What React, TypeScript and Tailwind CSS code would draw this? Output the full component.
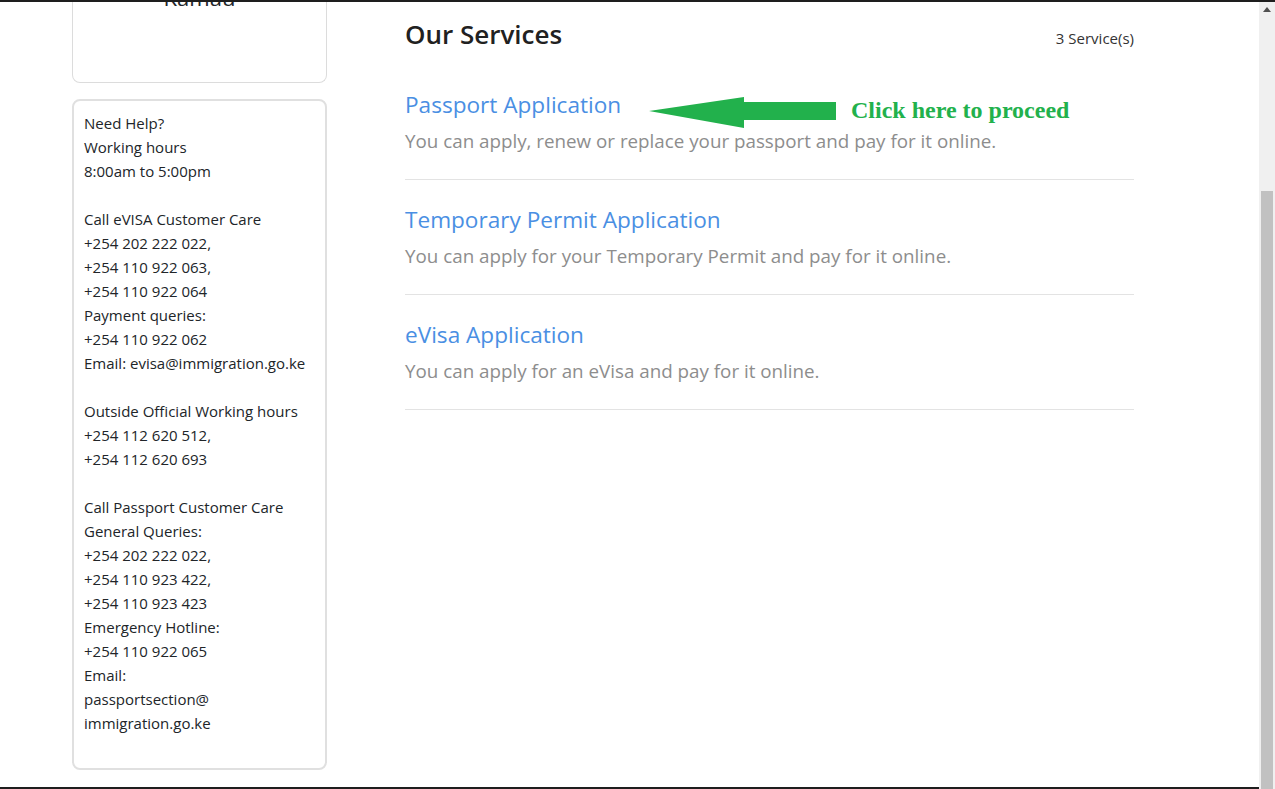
import React from 'react';

const helpLines: string[] = [
    'Need Help?',
    'Working hours',
    '8:00am to 5:00pm',
    '',
    'Call eVISA Customer Care',
    '+254 202 222 022,',
    '+254 110 922 063,',
    '+254 110 922 064',
    'Payment queries:',
    '+254 110 922 062',
    'Email: evisa@immigration.go.ke',
    '',
    'Outside Official Working hours',
    '+254 112 620 512,',
    '+254 112 620 693',
    '',
    'Call Passport Customer Care',
    'General Queries:',
    '+254 202 222 022,',
    '+254 110 923 422,',
    '+254 110 923 423',
    'Emergency Hotline:',
    '+254 110 922 065',
    'Email:',
    'passportsection@',
    'immigration.go.ke',
    '',
];

const services = [
    { title: 'Passport Application', desc: 'You can apply, renew or replace your passport and pay for it online.' },
    { title: 'Temporary Permit Application', desc: 'You can apply for your Temporary Permit and pay for it online.' },
    { title: 'eVisa Application', desc: 'You can apply for an eVisa and pay for it online.' },
];

const ProceedHint: React.FC = () => (
    <div className="absolute left-[244px] top-[31px] flex items-center gap-[15px]">
        <svg width="187" height="32" viewBox="0 0 187 32">
            <polygon points="0,15 95,1 95,6 187,6 187,24 95,24 95,32" fill="#22b14c" />
        </svg>
        <span className="-mt-[4px] text-[24px] font-bold leading-none text-[#22b14c] whitespace-nowrap" style={{ fontFamily: '"Liberation Serif", "Times New Roman", serif' }}>
            Click here to proceed
        </span>
    </div>
);

const App: React.FC = () => {
    return (
        <div className="h-[789px] w-[1275px] flex flex-col overflow-hidden bg-white" style={{ fontFamily: '"Open Sans", "Noto Sans", sans-serif' }}>
            <div className="h-[2px] bg-[#1e1e1e]" />
            <div className="flex flex-1 min-h-0">
                <div className="flex-1 flex flex-col min-w-0">
                    <div className="flex-1 min-h-0 overflow-hidden flex gap-[78px] pl-[72px]">
                        {/* sidebar */}
                        <aside className="w-[255px] shrink-0">
                            <div className="h-[81px] border-x border-b border-[#dcdcdc] rounded-b-[8px] overflow-hidden">
                                <div className="-mt-[20px] text-center text-[22px] leading-[30px] text-[#212529]">Kamau</div>
                            </div>
                            <div className="mt-[16px] border-2 border-[#e0e0e0] rounded-[8px] px-[10px] pt-[10px] pb-[9px]">
                                {helpLines.map((line, i) => (
                                    <div key={i} className="h-[24px] text-[15px] leading-[24px] text-[#212529] whitespace-nowrap">
                                        {line}
                                    </div>
                                ))}
                            </div>
                        </aside>

                        {/* services */}
                        <main className="w-[729px] shrink-0 pt-[17px]">
                            <header className="flex items-baseline justify-between mb-[15px]">
                                <h1 className="text-[26px] leading-[31px] font-semibold text-[#212121]">Our Services</h1>
                                <span className="text-[15px] text-[#333]">3 Service(s)</span>
                            </header>
                            <div>
                                {services.map((s, i) => (
                                    <div key={s.title} className="relative pt-[25px] pb-[25px] border-b border-[#e3e3e3]">
                                        <a className="block text-[22.6px] leading-[29px] text-[#4a8fe3] cursor-pointer w-fit">{s.title}</a>
                                        <p className="mt-[9px] text-[18.8px] leading-[26px] text-[#8d8d8d] whitespace-nowrap">{s.desc}</p>
                                        {i === 0 && <ProceedHint />}
                                    </div>
                                ))}
                            </div>
                        </main>
                    </div>
                    <div className="h-[2px] bg-[#1e1e1e]" />
                </div>

                {/* scrollbar */}
                <div className="w-[16px] shrink-0 bg-[#f0f0f0] flex flex-col">
                    <div className="h-[14px] flex items-center justify-center">
                        <svg width="8" height="5" viewBox="0 0 8 5"><polygon points="4,0 8,5 0,5" fill="#505050" /></svg>
                    </div>
                    <div className="h-[175px]" />
                    <div className="flex-1 mx-[2px] bg-[#c1c1c1]" />
                </div>
            </div>
        </div>
    );
};

export default App;
